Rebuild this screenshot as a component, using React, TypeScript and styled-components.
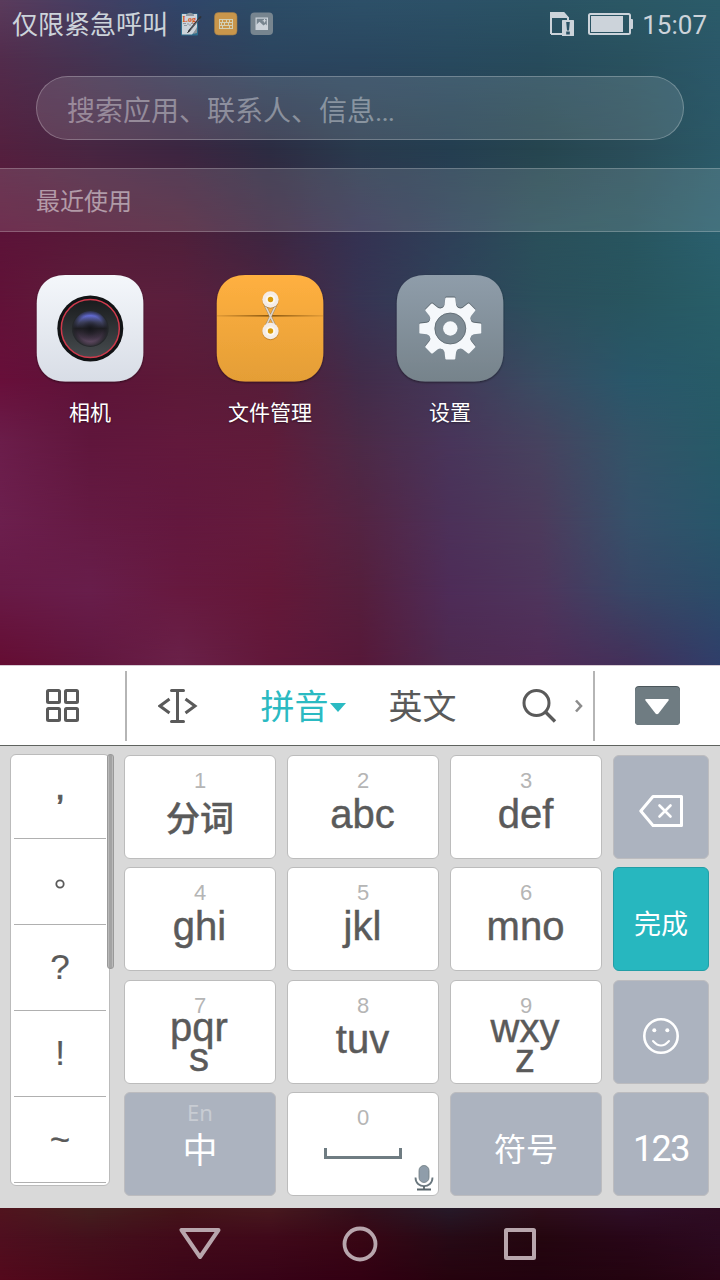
import React from "react";
import styled, { createGlobalStyle } from "styled-components";

const CJK = `"Noto Sans CJK SC", sans-serif`;

const GlobalStyle = createGlobalStyle`
  * { box-sizing: border-box; }
  body { margin: 0; background: #000; }
`;

const Screen = styled.main`
  width: 720px;
  height: 1280px;
  display: flex;
  flex-direction: column;
  overflow: hidden;
  font-family: Roboto, ${CJK};
`;

/* ---------- wallpaper: a colour mesh built of blended bands ---------- */

const Mesh = styled.div`
  position: absolute;
  inset: 0;
  display: flex;
  flex-direction: column;
  z-index: 0;
`;

const Band = styled.div<{ $h: number; $from: string[]; $to: string[] }>`
  height: ${(p) => p.$h}px;
  flex: none;
  background: linear-gradient(90deg, ${(p) => p.$to.join(", ")});
  &::before {
    content: "";
    display: block;
    height: 100%;
    background: linear-gradient(90deg, ${(p) => p.$from.join(", ")});
    mask-image: linear-gradient(180deg, #000, transparent);
  }
`;

type MeshRow = { y: number; colors: string[] };

const homeMesh: MeshRow[] = [
  { y: 0, colors: ["#5a3b5c", "#443f63", "#30466a", "#2c4c66", "#2d5068", "#2c5167", "#2a5364", "#2b5865", "#2b5b69"] },
  { y: 60, colors: ["#522c4c", "#443452", "#353d59", "#2c455f", "#2a465f", "#28495e", "#274b5c", "#29515f", "#2b5869"] },
  { y: 150, colors: ["#54203f", "#482642", "#3c2641", "#2c2c42", "#293a4d", "#243e50", "#26454f", "#2a4d59", "#2b5967"] },
  { y: 235, colors: ["#5c1338", "#561a38", "#4f1f3a", "#3d2641", "#343252", "#2e4058", "#2a4f5a", "#28555f", "#2a5f6d"] },
  { y: 300, colors: ["#611238", "#5e1f3c", "#5b1f3d", "#4c2440", "#373453", "#2f435a", "#2b4f5c", "#28555f", "#285e68"] },
  { y: 380, colors: ["#680f3a", "#5d1338", "#5c1a38", "#571d39", "#422c4a", "#433858", "#394c62", "#29576a", "#275b68"] },
  { y: 440, colors: ["#6b1d4a", "#60163c", "#62193c", "#5f1c3a", "#4b2a47", "#48355a", "#46435f", "#335468", "#275a68"] },
  { y: 520, colors: ["#6c1f4e", "#651a43", "#63183e", "#641b3c", "#542443", "#4c3159", "#4c3b5c", "#36516a", "#28566a"] },
  { y: 590, colors: ["#681a46", "#681e4b", "#67193f", "#641838", "#551f3d", "#4e2c58", "#4e355c", "#384766", "#2b4d69"] },
  { y: 665, colors: ["#650d33", "#62163e", "#6a2149", "#62183a", "#571839", "#4e294f", "#502b56", "#43305a", "#303e6a"] },
];

const navMesh: MeshRow[] = [
  { y: 0, colors: ["#51141f", "#44201f", "#441519", "#481a1f", "#33101c", "#261a29", "#2f0f1b", "#2f1028", "#2e0c22"] },
  { y: 30, colors: ["#4f0f1f", "#44101c", "#420a1a", "#40091a", "#380614", "#260a16", "#24060f", "#280618", "#2c0a20"] },
  { y: 72, colors: ["#54091c", "#470819", "#3c0618", "#380317", "#330013", "#26030e", "#22030f", "#240410", "#2a0517"] },
];

function ColorMesh({ rows }: { rows: MeshRow[] }) {
  return (
    <Mesh>
      {rows.slice(1).map((row, i) => (
        <Band key={row.y} $h={row.y - rows[i].y} $from={rows[i].colors} $to={row.colors} />
      ))}
    </Mesh>
  );
}

/* ---------- home ---------- */

const Home = styled.section`
  position: relative;
  height: 665px;
  flex: none;
`;

const HomeContent = styled.div`
  position: relative;
  z-index: 1;
  display: flex;
  flex-direction: column;
`;

const StatusBar = styled.header`
  height: 48px;
  display: flex;
  align-items: center;
  padding: 0 13px 0 12px;
  color: #ccd3da;
`;

const Carrier = styled.span`
  font: 400 26px/46px ${CJK};
  padding-bottom: 2px;
  margin-right: 12px;
`;

const StatusIcons = styled.div<{ $gap: number }>`
  display: flex;
  align-items: center;
  gap: ${(p) => p.$gap}px;
`;

const Clock = styled.time`
  font: 400 26px/48px Roboto, sans-serif;
  margin-left: 9px;
  padding-top: 2px;
`;

const Spacer = styled.div`
  flex: 1;
`;

const SearchBox = styled.div`
  height: 64px;
  margin: 28px 36px 0;
  border-radius: 32px;
  border: 1px solid rgba(255, 255, 255, 0.25);
  background: rgba(255, 255, 255, 0.12);
  padding: 2px 0 0 30px;
  font: 400 28px/60px ${CJK};
  color: rgba(255, 255, 255, 0.38);
`;

const Ellipsis = styled.span`
  font-family: Roboto, sans-serif;
  letter-spacing: -1px;
`;

const SectionBar = styled.div`
  height: 64px;
  margin-top: 28px;
  padding-left: 36px;
  border-top: 1px solid rgba(255, 255, 255, 0.22);
  border-bottom: 1px solid rgba(255, 255, 255, 0.22);
  background: rgba(255, 255, 255, 0.12);
  font: 400 24px/62px ${CJK};
  color: rgba(255, 255, 255, 0.5);
`;

const AppGrid = styled.div`
  display: grid;
  grid-template-columns: repeat(4, 180px);
  padding-top: 40px;
`;

const AppItem = styled.div`
  display: flex;
  flex-direction: column;
  align-items: center;
`;

const AppLabel = styled.span`
  font: 400 21px/30px ${CJK};
  color: #fff;
  margin-top: 10px;
  text-shadow: 0 1px 2px rgba(0, 0, 0, 0.4);
`;

/* ---------- keyboard ---------- */

const Keyboard = styled.section`
  height: 543px;
  flex: none;
  display: flex;
  flex-direction: column;
  background: #d9d9d9;
`;

const Toolbar = styled.div`
  height: 81px;
  background: #fff;
  border-top: 1px solid #d8ccd4;
  border-bottom: 1px solid #5f635f;
  display: flex;
  align-items: center;
`;

const Tool = styled.div<{ $w: number; $color?: string }>`
  width: ${(p) => p.$w}px;
  height: 78px;
  display: flex;
  align-items: center;
  justify-content: center;
  color: ${(p) => p.$color ?? "#5a5a5a"};
`;

const ToolLabel = styled.span`
  font: 400 34px/76px ${CJK};
  padding-bottom: 2px;
`;

const Caret = styled.svg`
  margin: 3px 0 0 1px;
`;

const SearchGlyph = styled.svg`
  margin-left: 45px;
`;

const ToolDivider = styled.div`
  width: 2px;
  height: 70px;
  background: #b5b5b5;
`;

const KeyArea = styled.div`
  display: flex;
  padding: 8px 11px 0 10px;
`;

const Punctuation = styled.div`
  position: relative;
  width: 100px;
  height: 432px;
  background: #fff;
  border: 1px solid #bbb;
  border-radius: 6px;
  padding: 0 3px;
  display: flex;
  flex-direction: column;
`;

const PunctKey = styled.div<{ $first?: boolean; $lift?: number }>`
  height: ${(p) => (p.$first ? 84 : 86)}px;
  border-bottom: 1px solid #b0b0b0;
  padding-bottom: ${(p) => p.$lift ?? 0}px;
  display: flex;
  align-items: center;
  justify-content: center;
  color: #5a5a5a;
  font: 400 35px/60px "Liberation Sans", sans-serif;
  -webkit-text-stroke: ${(p) => (p.$first ? 0.9 : 0.2)}px #5a5a5a;
`;

const ScrollThumb = styled.div`
  position: absolute;
  left: 96px;
  top: -1px;
  width: 7px;
  height: 215px;
  border-radius: 3px;
  border: 1px solid #999;
  background: linear-gradient(90deg, #b9b9b9 0 1px, #a3a3a3 1px 4px, #b9b9b9 4px);
`;

const Keys = styled.div`
  margin: 1px 0 0 14px;
  display: grid;
  grid-template-columns: 152px 152px 152px 96px;
  grid-template-rows: repeat(4, 104px);
  column-gap: 11px;
  row-gap: 8.4px;
`;

const toneFill = { light: "#ffffff", grey: "#acb3bf", teal: "#27b7bf" };
const toneEdge = { light: "#bcbcbc", grey: "#bcbcbf", teal: "#239ea6" };

const Key = styled.div<{ $tone: "light" | "grey" | "teal" }>`
  position: relative;
  background: ${(p) => toneFill[p.$tone]};
  border: 1px solid ${(p) => toneEdge[p.$tone]};
  border-radius: 6px;
  display: flex;
  flex-direction: column;
  align-items: center;
  color: ${(p) => (p.$tone === "light" ? "#5a5a5a" : "#fff")};
`;

const Digit = styled.span`
  font: 400 22px/24px "Liberation Sans", sans-serif;
  color: #b5b5b5;
  margin-top: 13px;
`;

const Letters = styled.span<{ $stacked?: boolean; $drop?: number }>`
  font: 400 40px/${(p) => (p.$stacked ? 30 : 40)}px "Liberation Sans", sans-serif;
  -webkit-text-stroke: 0.45px #5a5a5a;
  margin-top: ${(p) => (p.$stacked ? -6 + (p.$drop ?? 0) : 1)}px;
  padding-right: ${(p) => (p.$stacked ? 2 : 1)}px;
  display: flex;
  flex-direction: column;
  align-items: center;
`;

const KeyWord = styled.span<{ $size: number; $top: number; $bold?: boolean }>`
  font: ${(p) => (p.$bold ? 500 : 400)} ${(p) => p.$size}px/44px ${CJK};
  -webkit-text-stroke: ${(p) => (p.$bold ? 0.4 : 0)}px currentColor;
  margin-top: ${(p) => p.$top}px;
`;

const NumberWord = styled.span`
  font: 400 36px/44px Roboto, sans-serif;
  letter-spacing: -1.5px;
  margin-top: 34px;
`;

const AltLabel = styled.span`
  font: 400 22px/26px "Noto Sans", sans-serif;
  color: #c8ccd3;
  margin-top: 6px;
`;

const KeyIcon = styled.div`
  flex: 1;
  display: flex;
  align-items: center;
  padding-top: 8px;
`;

const SpaceIcon = styled.svg`
  margin-top: 18px;
`;

const MicIcon = styled.svg`
  position: absolute;
  right: 4px;
  bottom: 4px;
`;

/* ---------- navigation ---------- */

const NavBar = styled.nav`
  position: relative;
  height: 72px;
  flex: none;
`;

const NavButtons = styled.div`
  position: relative;
  z-index: 1;
  height: 72px;
  padding: 0 120px;
  display: grid;
  grid-template-columns: repeat(3, 160px);
  place-items: center;
`;

/* ---------- drawings ---------- */

function LogIcon() {
  return (
    <svg width="22" height="24" viewBox="0 0 22 24">
      <rect x="1" y="1.5" width="17" height="22" rx="1" fill="#2d6d8d" />
      <path d="M2 2h15v15l-5 5.5H2z" fill="#ccd3da" />
      <path d="M6 2.5q4-3.5 8 0v1.5H6z" fill="#8d979f" />
      <text x="2.6" y="9.6" fontSize="8" fontWeight="700" fontFamily="Liberation Serif, serif" fill="#d5561d">Log</text>
      <path d="M3 11.5h3M7 12h2M11 11.5h2M4 13.5h3M9 13h2" stroke="#9098a0" strokeWidth="1" />
      <path d="M13 22l4-7v6z" fill="#8a9299" />
      <path d="M20.5 5L9 19" stroke="#30343a" strokeWidth="1.9" strokeLinecap="round" />
      <path d="M19 7.5l-8.5 10" stroke="#8b9298" strokeWidth="0.6" />
      <path d="M7.5 21l1.5-2" stroke="#222" strokeWidth="1" />
    </svg>
  );
}

function KeyboardIcon() {
  return (
    <svg width="24" height="24" viewBox="0 0 24 24">
      <rect x="0.5" y="0.5" width="22.5" height="22.5" rx="4" fill="#c9964b" stroke="#9c7c4c" strokeWidth="0.6" />
      <rect x="5.5" y="7.5" width="13" height="9" fill="none" stroke="#d3d0b5" />
      <path d="M5 10.5h14M5 13.5h14M8.5 7v3.5M12.5 7v3.5M15.5 7v3.5M7.5 10.5v3M10.5 10.5v3M14.5 10.5v3M8.5 13.5v3M15.5 13.5v3" stroke="#d3d0b5" />
    </svg>
  );
}

function PictureIcon() {
  return (
    <svg width="24" height="24" viewBox="0 0 24 24">
      <rect x="0.5" y="0.5" width="22.5" height="22.5" rx="4" fill="#77858f" />
      <rect x="6.1" y="6.1" width="11.3" height="11.3" fill="none" stroke="#ccd3da" strokeWidth="1.2" />
      <path d="M6 13l3.5-3.2 4 3.7 2-1.5 2 2V17.5H6z" fill="#ccd3da" />
      <path d="M14.5 7v3.5M12.7 8.8h3.5" stroke="#ccd3da" strokeWidth="1.1" />
    </svg>
  );
}

function SimAlertIcon() {
  return (
    <svg width="24" height="24" viewBox="0 0 24 24">
      <path d="M1 22V1h12.5L18 6v2.5M1 22h11" fill="none" stroke="#ccd3da" strokeWidth="2" />
      <path d="M0 0h14l5 6H0z" fill="#ccd3da" />
      <rect x="12" y="8" width="12" height="16" rx="0.5" fill="#ccd3da" />
      <path d="M16.2 10h3.6l-.8 8.5h-2zM16.2 19.6h3.6v2.8h-3.6z" fill="#2c5265" />
    </svg>
  );
}

function BatteryIcon() {
  return (
    <svg width="45" height="22" viewBox="0 0 45 22">
      <rect x="1" y="1" width="41" height="20" rx="1.5" fill="none" stroke="#ccd3da" strokeWidth="2" />
      <rect x="3" y="3" width="32" height="16" fill="#ccd3da" />
      <path d="M43 6h1a1 1 0 0 1 1 1v8a1 1 0 0 1-1 1h-1z" fill="#ccd3da" />
    </svg>
  );
}

const tile =
  "M30 3H79C97 3 108 14 108 31.5V80.5C108 98 97 109.5 79 109.5H30C12 109.5 1.5 98 1.5 80.5V31.5C1.5 14 12 3 30 3Z";

function TileDefs({ id, top, bottom }: { id: string; top: string; bottom: string }) {
  return (
    <defs>
      <linearGradient id={id} x1="0" y1="0" x2="0" y2="1">
        <stop offset="0" stopColor={top} />
        <stop offset="1" stopColor={bottom} />
      </linearGradient>
      <filter id={id + "-shadow"} x="-10%" y="-10%" width="120%" height="120%">
        <feDropShadow dx="0" dy="1" stdDeviation="1" floodColor="#000" floodOpacity="0.5" />
      </filter>
    </defs>
  );
}

function CameraIcon() {
  return (
    <svg width="110" height="114" viewBox="0 0 110 114">
      <TileDefs id="cam" top="#f4f7fb" bottom="#d8dde6" />
      <defs>
        <linearGradient id="cam-body" x1="0" y1="0" x2="0" y2="1">
          <stop offset="0" stopColor="#191b1d" />
          <stop offset="1" stopColor="#474c4f" />
        </linearGradient>
        <linearGradient id="cam-lens" x1="0" y1="0" x2="0" y2="1">
          <stop offset="0" stopColor="#5a62c8" />
          <stop offset="0.14" stopColor="#6a74e4" />
          <stop offset="0.32" stopColor="#45486a" />
          <stop offset="0.5" stopColor="#1e1d22" />
          <stop offset="0.75" stopColor="#45374a" />
          <stop offset="1" stopColor="#7d5f7d" />
        </linearGradient>
        <radialGradient id="cam-glow">
          <stop offset="0" stopColor="#15151a" stopOpacity="0.9" />
          <stop offset="0.45" stopColor="#1b1b20" stopOpacity="0.25" />
          <stop offset="0.7" stopColor="#1b1b20" stopOpacity="0.1" />
          <stop offset="1" stopColor="#25282b" stopOpacity="1" />
        </radialGradient>
      </defs>
      <path d={tile} transform="translate(.3 0)" fill="url(#cam)" filter="url(#cam-shadow)" />
      <circle cx="55.3" cy="56.5" r="33" fill="#111315" />
      <circle cx="55.3" cy="56.5" r="29" fill="url(#cam-body)" stroke="#cf3a4c" strokeWidth="1.5" />
      <circle cx="55.3" cy="56.5" r="17.5" fill="url(#cam-lens)" />
      <circle cx="55.3" cy="56.5" r="18.5" fill="url(#cam-glow)" />
    </svg>
  );
}

function FilesIcon() {
  return (
    <svg width="110" height="114" viewBox="0 0 110 114">
      <TileDefs id="files" top="#ffb040" bottom="#e49e36" />
      <defs>
        <linearGradient id="files-fold">
          <stop offset="0" stopColor="#9a6418" stopOpacity="0.2" />
          <stop offset="0.5" stopColor="#8a570f" />
          <stop offset="1" stopColor="#9a6418" stopOpacity="0.2" />
        </linearGradient>
      </defs>
      <path d={tile} transform="translate(.3 0)" fill="url(#files)" filter="url(#files-shadow)" />
      <rect x="2" y="43" width="106" height="1.6" fill="url(#files-fold)" />
      <path d="M50 33l11 23M61 33L50 56" stroke="#a88a5c" strokeWidth="2.6" />
      <path d="M50 33l11 23M61 33L50 56" stroke="#dcd4cc" strokeWidth="1.6" />
      {[27.5, 59].map((cy) => (
        <g key={cy}>
          <circle cx="55.5" cy={cy + 1} r="8.3" fill="#9b6a20" opacity="0.5" />
          <circle cx="55.5" cy={cy} r="8.2" fill="#f4ece6" />
          <circle cx="55.5" cy={cy} r="4.6" fill="#fff8ec" />
          <circle cx="55.5" cy={cy} r="2.7" fill="#d89c0c" />
        </g>
      ))}
    </svg>
  );
}

function SettingsIcon() {
  const angles = [0, 45, 90, 135, 180, 225, 270, 315];
  return (
    <svg width="110" height="114" viewBox="0 0 110 114">
      <TileDefs id="set" top="#8f9daa" bottom="#76838b" />
      <path d={tile} transform="translate(.3 0)" fill="url(#set)" filter="url(#set-shadow)" />
      {[{ dy: -1, fill: "#5d6870" }, { dy: 0, fill: "#f5f8fb" }].map((layer) => (
        <g key={layer.dy} transform={`translate(55.3 ${56.5 + layer.dy})`} fill={layer.fill}>
          <circle r="18.5" fill="none" stroke={layer.fill} strokeWidth="6.5" />
          {angles.map((a) => (
            <path
              key={a}
              transform={`rotate(${a})`}
              d="M-9.5-19.5Q-6.2-21-5.8-23.5L-5-30.2Q-4.8-31-4-31H4Q4.8-31 5-30.2L5.8-23.5Q6.2-21 9.5-19.5L6-16H-6z"
            />
          ))}
        </g>
      ))}
      <circle cx="55.3" cy="56.5" r="15.5" fill="#7f8c95" stroke="#5d6870" strokeWidth="0.8" />
      <circle cx="55.3" cy="56.5" r="7.2" fill="#f5f8fb" />
    </svg>
  );
}

/* ---------- data ---------- */

const apps = [
  { label: "相机", Icon: CameraIcon },
  { label: "文件管理", Icon: FilesIcon },
  { label: "设置", Icon: SettingsIcon },
];

const punctuation = ["?", "!", "~"];

function LetterKey({ digit, lines, drop }: { digit: string; lines: string[]; drop?: number }) {
  return (
    <Key $tone="light">
      <Digit>{digit}</Digit>
      <Letters $stacked={lines.length > 1} $drop={drop}>
        {lines.map((line) => (
          <span key={line}>{line}</span>
        ))}
      </Letters>
    </Key>
  );
}

export default function App() {
  return (
    <Screen>
      <GlobalStyle />
      <Home>
        <ColorMesh rows={homeMesh} />
        <HomeContent>
          <StatusBar>
            <Carrier>仅限紧急呼叫</Carrier>
            <StatusIcons $gap={12}>
              <LogIcon />
              <KeyboardIcon />
              <PictureIcon />
            </StatusIcons>
            <Spacer />
            <StatusIcons $gap={14}>
              <SimAlertIcon />
              <BatteryIcon />
            </StatusIcons>
            <Clock>15:07</Clock>
          </StatusBar>
          <SearchBox>
            搜索应用、联系人、信息<Ellipsis>...</Ellipsis>
          </SearchBox>
          <SectionBar>最近使用</SectionBar>
          <AppGrid>
            {apps.map(({ label, Icon }) => (
              <AppItem key={label}>
                <Icon />
                <AppLabel>{label}</AppLabel>
              </AppItem>
            ))}
          </AppGrid>
        </HomeContent>
      </Home>

      <Keyboard>
        <Toolbar>
          <Tool $w={125}>
            <svg width="34" height="34" viewBox="0 0 34 34" fill="none" stroke="#5a5a5a" strokeWidth="3">
              <rect x="1.5" y="1.5" width="12" height="12" rx="1" />
              <rect x="19.5" y="1.5" width="12" height="12" rx="1" />
              <rect x="1.5" y="19.5" width="12" height="12" rx="1" />
              <rect x="19.5" y="19.5" width="12" height="12" rx="1" />
            </svg>
          </Tool>
          <ToolDivider />
          <Tool $w={101}>
            <svg width="40" height="34" viewBox="0 0 40 34" fill="none" stroke="#5a5a5a" strokeWidth="3">
              <path d="M13.5 1.5h12M13.5 32.5h12M19.5 2v30" strokeLinecap="round" />
              <path d="M11.5 10L2 17l9.5 7M27.500 10l9.500 7-9.500 7" />
            </svg>
          </Tool>
          <Tool $w={150} $color="#2bbac2">
            <ToolLabel>拼音</ToolLabel>
            <Caret width="16" height="9" viewBox="0 0 16 9">
              <path d="M0 0h16L8 9z" fill="#2bbac2" />
            </Caret>
          </Tool>
          <Tool $w={89}>
            <ToolLabel>英文</ToolLabel>
          </Tool>
          <Tool $w={126}>
            <SearchGlyph width="62" height="36" viewBox="0 0 62 36" fill="none">
              <circle cx="14.5" cy="15" r="12.5" stroke="#5a5a5a" strokeWidth="3" />
              <path d="M23.500 24l9.5 9.5" stroke="#5a5a5a" strokeWidth="3.4" />
              <path d="M54 12.5l5 5.5-5 5.5" stroke="#8c8c8c" strokeWidth="2.6" />
            </SearchGlyph>
          </Tool>
          <ToolDivider />
          <Tool $w={125}>
            <svg width="45" height="39" viewBox="0 0 45 39">
              <rect width="45" height="39" rx="4" fill="#4b565b" />
              <rect y="1" width="45" height="38" rx="4" fill="#6f7c82" />
              <path d="M11 13h22q1.5 0 .5 1.5L23.5 27.5q-1.5 1.5-3 0L10.5 14.5Q9.5 13 11 13z" fill="#fff" />
            </svg>
          </Tool>
        </Toolbar>

        <KeyArea>
          <Punctuation>
            <PunctKey $first $lift={20}>,</PunctKey>
            <PunctKey>
              <svg width="10" height="14" viewBox="0 0 10 14">
                <circle cx="5" cy="9" r="3.7" fill="none" stroke="#5a5a5a" strokeWidth="1.8" />
              </svg>
            </PunctKey>
            {punctuation.map((p) => (
              <PunctKey key={p} $lift={p === "~" ? 0 : 2}>
                {p}
              </PunctKey>
            ))}
            <ScrollThumb />
          </Punctuation>

          <Keys>
            <Key $tone="light">
              <Digit>1</Digit>
              <KeyWord $size={34} $top={2} $bold>分词</KeyWord>
            </Key>
            <LetterKey digit="2" lines={["abc"]} />
            <LetterKey digit="3" lines={["def"]} />
            <Key $tone="grey">
              <KeyIcon>
                <svg width="44" height="32" viewBox="0 0 44 32" fill="none" stroke="#fff">
                  <path d="M14 1.5h28.5v29H14L1.8 16z" strokeWidth="3" strokeLinejoin="round" />
                  <path d="M20.5 10.5l11 11M31.5 10.5l-11 11" strokeWidth="2.6" strokeLinecap="round" />
                </svg>
              </KeyIcon>
            </Key>

            <LetterKey digit="4" lines={["ghi"]} />
            <LetterKey digit="5" lines={["jkl"]} />
            <LetterKey digit="6" lines={["mno"]} />
            <Key $tone="teal">
              <KeyWord $size={27} $top={33}>完成</KeyWord>
            </Key>

            <LetterKey digit="7" lines={["pqr", "s"]} />
            <LetterKey digit="8" lines={["tuv"]} />
            <LetterKey digit="9" lines={["wxy", "z"]} drop={1} />
            <Key $tone="grey">
              <KeyIcon>
                <svg width="36" height="36" viewBox="0 0 36 36" fill="none" stroke="#fff">
                  <circle cx="18" cy="18" r="16.7" strokeWidth="2.6" />
                  <path d="M10 23q8 9 16 0" strokeWidth="2" strokeLinecap="round" />
                  <circle cx="11.3" cy="12.3" r="2" fill="#fff" stroke="none" />
                  <circle cx="24.3" cy="12.3" r="2" fill="#fff" stroke="none" />
                </svg>
              </KeyIcon>
            </Key>

            <Key $tone="grey">
              <AltLabel>En</AltLabel>
              <KeyWord $size={35} $top={1}>中</KeyWord>
            </Key>
            <Key $tone="light">
              <Digit>0</Digit>
              <SpaceIcon width="78" height="11" viewBox="0 0 78 11" fill="none">
                <path d="M1.5 0v9.5h75V0" stroke="#6f7c82" strokeWidth="3" />
              </SpaceIcon>
              <MicIcon width="20" height="26" viewBox="0 0 20 26" fill="none">
                <rect x="5" y="0.5" width="10" height="17" rx="5" fill="#8f9daa" stroke="#6f7c82" strokeWidth="0.8" />
                <path d="M1.5 12.5c0 11.5 17 11.5 17 0" stroke="#6a777e" strokeWidth="1.8" />
                <path d="M10 21v3.5M3 24.5h14" stroke="#5a666c" strokeWidth="1.8" />
              </MicIcon>
            </Key>
            <Key $tone="grey">
              <KeyWord $size={32} $top={32}>符号</KeyWord>
            </Key>
            <Key $tone="grey">
              <NumberWord>123</NumberWord>
            </Key>
          </Keys>
        </KeyArea>
      </Keyboard>

      <NavBar>
        <ColorMesh rows={navMesh} />
        <NavButtons>
          <svg width="42" height="32" viewBox="0 0 42 32" fill="none">
            <path d="M2.5 2h37L21 29z" stroke="#b8a6ad" strokeWidth="4" strokeLinejoin="round" />
          </svg>
          <svg width="36" height="36" viewBox="0 0 36 36" fill="none">
            <circle cx="18" cy="18" r="15.5" stroke="#b8a6ad" strokeWidth="3.8" />
          </svg>
          <svg width="32" height="32" viewBox="0 0 32 32" fill="none">
            <rect x="2" y="2" width="28" height="28" rx="0.5" stroke="#b8a6ad" strokeWidth="4" strokeLinejoin="round" />
          </svg>
        </NavButtons>
      </NavBar>
    </Screen>
  );
}
